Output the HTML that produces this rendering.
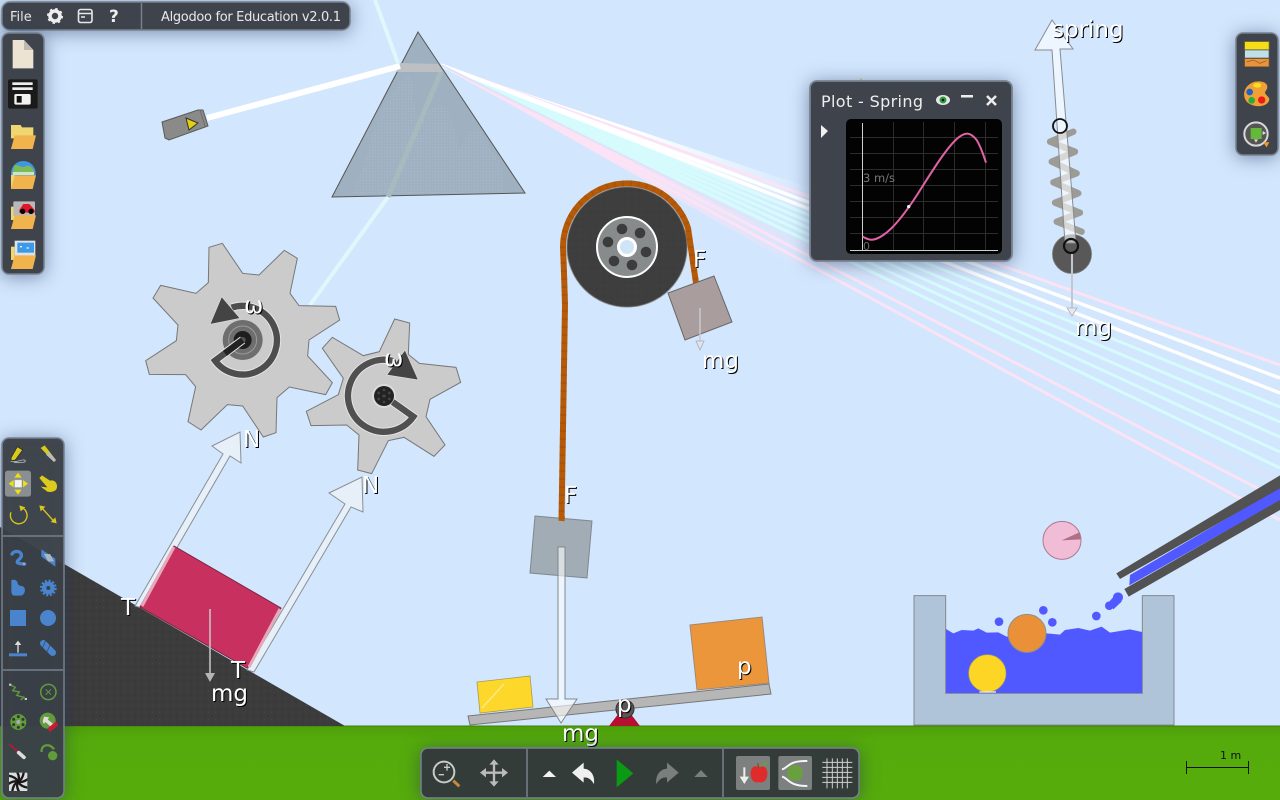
<!DOCTYPE html>
<html><head><meta charset="utf-8"><title>Algodoo</title>
<style>
html,body{margin:0;padding:0;width:1280px;height:800px;overflow:hidden;background:#d2e6fd}
svg{display:block;font-family:"DejaVu Sans",sans-serif}
.l{font-size:23px;fill:#fff;filter:drop-shadow(1px 1px 0 #000)}
.p{filter:drop-shadow(0 2px 9px rgba(30,50,90,.5))}
.u{fill:#e8e8e8;font-size:13px}
</style></head><body>
<svg width="1280" height="800" viewBox="0 0 1280 800" xmlns="http://www.w3.org/2000/svg">
<defs>
<pattern id="dots" width="7" height="7" patternUnits="userSpaceOnUse"><rect width="7" height="7" fill="#3c3c3c"/><circle cx="2" cy="2" r=".8" fill="#333"/><circle cx="5.5" cy="5.5" r=".7" fill="#444"/></pattern>
<pattern id="mot" width="3" height="3" patternUnits="userSpaceOnUse"><rect width="3" height="3" fill="#a0b2c1"/><rect width="1" height="1" fill="#a9bdd4"/></pattern>
<linearGradient id="gr" x1="0" y1="0" x2="0" y2="1"><stop offset="0" stop-color="#4e9f0a"/><stop offset=".2" stop-color="#55ab0b"/><stop offset="1" stop-color="#56ac0b"/></linearGradient>
<linearGradient id="fw" gradientUnits="userSpaceOnUse" x1="441" y1="0" x2="820" y2="0"><stop offset="0" stop-color="#fff"/><stop offset=".5" stop-color="#fff"/><stop offset="1" stop-color="#fff" stop-opacity="0"/></linearGradient>
<linearGradient id="fc" gradientUnits="userSpaceOnUse" x1="441" y1="0" x2="820" y2="0"><stop offset="0" stop-color="#d6fbfd"/><stop offset=".5" stop-color="#d6fbfd"/><stop offset="1" stop-color="#d6fbfd" stop-opacity="0"/></linearGradient>
<linearGradient id="fp" gradientUnits="userSpaceOnUse" x1="441" y1="0" x2="820" y2="0"><stop offset="0" stop-color="#fbe2f6"/><stop offset=".45" stop-color="#fbe2f6"/><stop offset="1" stop-color="#fbe2f6" stop-opacity="0"/></linearGradient>
<clipPath id="sw"><rect x="27" y="1028" width="55" height="55"/></clipPath>
</defs>
<rect width="1280" height="800" fill="#d2e6fd"/>

<!-- rays -->
<polygon points="441,65 820,191 820,222" fill="url(#fw)"/>
<polygon points="441,65 820,222 820,251" fill="url(#fc)"/>
<polygon points="441,65 820,251 820,280" fill="url(#fp)"/>
<g fill="none" stroke-linecap="butt">
<g stroke="#fbe3f5" stroke-width="3">
<path d="M441 65L1280 500"/><path d="M441 65L1280 520"/><path d="M441 65L1280 365"/>
</g>
<g stroke="#d6fbfd" stroke-width="3">
<path d="M441 65L1280 468"/><path d="M441 65L1280 452"/><path d="M441 65L1280 437"/><path d="M441 65L1280 422"/><path d="M441 65L1280 407"/>
</g>
<g stroke="#fff" stroke-width="3.4">
<path d="M441 65L1280 378"/><path d="M441 65L1280 393"/>
</g>
<path d="M441 65L1280 482" stroke="#e0e2f8" stroke-width="2"/>
<path d="M375 0L398 63" stroke="#e2f7fb" stroke-width="4"/>
<path d="M388 197L310 305" stroke="#e2f7fb" stroke-width="4"/>
</g>

<!-- prism -->
<polygon points="418,32 525,193 332,197" fill="#9fb1c0" stroke="#555" stroke-width="1"/>
<path d="M352 195C372 150 372 110 405 78C420 70 408 130 425 115C450 85 452 130 460 150C470 125 480 120 490 150C505 160 502 185 503 192Z" fill="url(#mot)" opacity=".8"/>
<path d="M441 72L388 197" stroke="#a7bbbf" stroke-width="5" fill="none"/>
<polygon points="400,63 438,64 443,72 397,72" fill="#bcc0c2"/>
<path d="M207 118L400 66" stroke="#fff" stroke-width="6"/>

<!-- laser -->
<polygon points="162,122 198,110 203,110 208,126 169,140 165,138" fill="#8a8a88" stroke="#5a5a5a" stroke-width="1"/>
<path d="M200 110L205 126" stroke="#666" stroke-width=".8"/>
<polygon points="186,118 198,123 189,130" fill="#e0d010" stroke="#333" stroke-width="1"/>

<!-- ground & slope -->
<rect y="726" width="1280" height="74" fill="url(#gr)"/>
<rect y="725.5" width="1280" height="1" fill="#3f7f10"/>
<polygon points="0,527 345,726 0,726" fill="url(#dots)"/>

<!-- N arrows -->
<g fill="#e7f0f9" stroke="#8a8f95" stroke-width="1">
<polygon points="135,606 223,454 212,446 240,432 241,463 230,456 142,608"/>
<polygon points="247,670 345,504 329,493 362,477 363,512 351,507 254,672"/>
</g>
<!-- block -->
<polygon points="174,546 281,608 247,668 140,607" fill="#c7305f" stroke="#7c2342" stroke-width="1"/>
<path d="M174 547L142 606" stroke="#e6a9ba" stroke-width="3"/>
<path d="M280 609L249 667" stroke="#e6a9ba" stroke-width="3"/>
<path d="M210 609V675" stroke="#c9c9c9" stroke-opacity=".75" stroke-width="2"/>
<polygon points="205,673 215,673 210,682" fill="#b5b5b5"/>

<!-- gears -->
<g transform="translate(130 230) scale(.33333)">
<polygon points="237,52 277,40 338,130 387,135 463,61 502,85 480,190 507,227 617,229 629,270 537,330 533,378 607,458 587,494 478,471 441,503 438,608 400,621 338,528 292,524 213,600 174,575 197,470 167,434 58,433 47,392 139,332 144,285 69,204 92,166 198,190 235,158" fill="#cbcbcb" stroke="#777" stroke-width="3"/>
<circle cx="338" cy="330" r="60" fill="#6e6e6e"/>
<circle cx="338" cy="330" r="42" fill="none" stroke="#9a9a9a" stroke-width="3"/>
<circle cx="338" cy="330" r="27" fill="#1e1e1e"/>
<circle cx="338" cy="330" r="9" fill="#555"/>
<path d="M338 330L255 392A103 103 0 1 0 305 233" fill="none" stroke="#e4e4e4" stroke-width="25"/>
<path d="M338 330L255 392A103 103 0 1 0 305 233" fill="none" stroke="#4d4d4d" stroke-width="19"/>
<path d="M338 330L285 370" stroke="#222" stroke-width="19" fill="none"/>
<polygon points="240,283 275,200 330,265" fill="#444" stroke="#ddd" stroke-width="2"/>

<polygon points="794,267 839,279 835,373 868,400 978,412 992,457 900,508 888,560 945,645 912,679 822,622 775,632 725,731 683,720 687,615 650,585 543,587 529,544 625,494 640,445 577,355 607,322 700,377 748,365" fill="#cbcbcb" stroke="#777" stroke-width="3"/>
<circle cx="762" cy="498" r="36" fill="#dcdcdc"/>
<circle cx="762" cy="498" r="30" fill="#232323"/>
<g fill="#444"><circle cx="762" cy="498" r="5"/><circle cx="762" cy="480" r="4"/><circle cx="762" cy="516" r="4"/><circle cx="746" cy="489" r="4"/><circle cx="778" cy="489" r="4"/><circle cx="746" cy="507" r="4"/><circle cx="778" cy="507" r="4"/></g>
<path d="M788 516L850 560A108 108 0 1 1 790 393" fill="none" stroke="#e4e4e4" stroke-width="25"/>
<path d="M788 516L850 560A108 108 0 1 1 790 393" fill="none" stroke="#505050" stroke-width="19"/>
<polygon points="865,450 825,360 770,435" fill="#444" stroke="#ddd" stroke-width="2"/>
</g>

<!-- rope pulley -->
<circle cx="627" cy="247" r="60" fill="#404040" stroke="#9a9a9a" stroke-width="1.2"/>
<circle cx="627" cy="247" r="60" fill="url(#dots)" opacity=".6"/>
<circle cx="627" cy="247" r="30" fill="#878b8b" stroke="#fff" stroke-width="2"/>
<g fill="#3c3c3c"><circle cx="622" cy="229" r="5.3"/><circle cx="640" cy="233" r="5.3"/><circle cx="646" cy="252" r="5.3"/><circle cx="632" cy="265" r="5.3"/><circle cx="614" cy="261" r="5.3"/><circle cx="608" cy="242" r="5.3"/></g>
<circle cx="627" cy="247" r="8.5" fill="#cfe5f5" stroke="#fff" stroke-width="3"/>
<path d="M561.5 520L565 305Q564 270 563 247A64 64 0 0 1 688 228L696 283" fill="none" stroke="#b65a08" stroke-width="6"/>
<path d="M561.5 520L565 305Q564 270 563 247A64 64 0 0 1 688 228L696 283" fill="none" stroke="#8f4a10" stroke-width="6" stroke-dasharray="2 6" opacity=".35"/>
<polygon points="714,276 732,322 685,340 668,293" fill="#a99d9e" stroke="#666" stroke-width="1"/>
<path d="M700 308V342" stroke="#c6c8cc" stroke-width="1.5"/>
<polygon points="696,341 704,341 700,350" fill="#dfe5ec" stroke="#a9aeb5" stroke-width=".8"/>

<!-- gray box -->
<polygon points="535,516 592,521 587,578 530,573" fill="#a1acb5" stroke="#7f8890" stroke-width="1"/>
<path d="M561.5 521L562 516" stroke="#b65a08" stroke-width="6"/>

<!-- seesaw -->
<polygon points="477,682 530,676 533,707 480,713" fill="#fdd72a" stroke="#a89a55" stroke-width=".8"/>
<path d="M482 708L504 684" stroke="#fde98a" stroke-width="1.5"/>
<polygon points="690,625 762,617 769,683 697,690" fill="#ec963b" stroke="#9a8a78" stroke-width="1"/>
<polygon points="609,726 640,726 630,713 619,713" fill="#b60f30"/>
<polygon points="468,716 769,684 771,694 470,725" fill="#b6b6b6" stroke="#777" stroke-width="1"/>
<circle cx="625" cy="709" r="9" fill="#585858" stroke="#333" stroke-width="1"/>
<circle cx="622" cy="713" r="1.5" fill="#b60f30"/><circle cx="628" cy="712" r="1.5" fill="#b60f30"/>
<path d="M558 547h7V699h12L561 723L546 699h12Z" fill="#fff" fill-opacity=".6" stroke="#81878d" stroke-width="1"/>

<!-- spring -->
<circle cx="1072" cy="254" r="19.5" fill="#585858" stroke="#777" stroke-width=".8"/>
<g transform="translate(1020 10) scale(.33333)">
<path d="M160 365L90 395L165 425L95 455L170 490L100 517L175 550L105 578L180 608L110 635L185 665" fill="none" stroke="#9c9b96" stroke-width="19" stroke-linejoin="round" stroke-linecap="round"/>
</g>
<path d="M1065 243L1052 50H1035L1052 20L1073 49H1060L1076 243Z" fill="#fff" fill-opacity=".6" stroke="#868b92" stroke-width="1"/>
<circle cx="1060" cy="126" r="7" fill="none" stroke="#111" stroke-width="1.8"/>
<circle cx="1071" cy="246" r="7" fill="none" stroke="#111" stroke-width="2.2"/>
<path d="M1072 254V310" stroke="#c4c8ce" stroke-width="2"/>
<polygon points="1067,308 1077,308 1072,316" fill="#e4e9ef" stroke="#aab0b6" stroke-width=".8"/>

<!-- water scene -->
<g transform="translate(900 480) scale(.33333)">
<polygon points="42,347 137,347 137,640 727,640 727,347 822,347 822,735 42,735" fill="#afc4d8" stroke="#85898e" stroke-width="3"/>
<path d="M138 447L160 460L185 450L220 452L235 445L260 458L295 457L320 470L440 460L480 464L495 450L535 444L570 452L605 440L630 458L690 448L726 456V639H138Z" fill="#5059ff"/>
<circle cx="262" cy="580" r="56" fill="#fdd524" stroke="#a9a35c" stroke-width="2"/>
<rect x="238" y="634" width="50" height="4" fill="#e6edf5"/>
<circle cx="381" cy="460" r="57" fill="#ea9038" stroke="#8f8f85" stroke-width="3"/>
<circle cx="486" cy="181" r="57" fill="#f0bcd6" stroke="#b07a90" stroke-width="3"/>
<polygon points="485,181 538,157 543,178" fill="#b26f83"/>
<g fill="#5059ff"><circle cx="297" cy="425" r="13"/><circle cx="430" cy="391" r="13"/><circle cx="457" cy="427" r="13"/><circle cx="589" cy="408" r="13"/><circle cx="628" cy="377" r="13"/><circle cx="654" cy="352" r="15"/><path d="M628 365L645 345L665 365L640 388Z"/></g>
<polygon points="690,285 1140,22 1140,62 688,316" fill="#5059ff"/>
<polygon points="649,280 1140,-14 1140,25 660,297" fill="#525252"/>
<polygon points="673,327 1140,60 1140,90 686,350" fill="#525252"/>
</g>

<!-- labels -->
<g class="l">
<text x="243" y="447">N</text><text x="362" y="493">N</text>
<text x="121" y="615">T</text><text x="231" y="678">T</text>
<text x="211" y="701">mg</text>
<text x="244" y="313">ω</text><text x="384" y="366">ω</text>
<text x="693" y="267">F</text><text x="702" y="368">mg</text>
<text x="564" y="503">F</text>
<text x="737" y="674">p</text><text x="617" y="712">p</text><text x="562" y="741">mg</text>
<text x="1052" y="37">spring</text><text x="1075" y="335">mg</text>
</g>

<!-- scale -->
<g stroke="#111" stroke-width="1" fill="none"><path d="M1186 767.5H1249M1186.5 761V774M1248.5 761V774"/></g>
<text x="1220" y="759" font-size="11" fill="#111">1 m</text>

<!-- top bar -->
<rect class="p" x="2" y="2" width="348" height="28" rx="8" fill="#3f444c" stroke="#77818f" stroke-width="1.5"/>
<path d="M141.500 3V29" stroke="#777f89" stroke-width="1.500"/>
<text x="10" y="21" class="u">File</text>
<text x="161" y="21" class="u" textLength="180" lengthAdjust="spacing">Algodoo for Education v2.0.1</text>
<circle cx="55" cy="16" r="5" fill="none" stroke="#eee" stroke-width="3.600"/><circle cx="55" cy="16" r="7" fill="none" stroke="#eee" stroke-width="2" stroke-dasharray="2.400 3.100"/>
<rect x="78.500" y="9.500" width="13.500" height="13" rx="2" fill="none" stroke="#e8e8e8" stroke-width="1.600"/><path d="M79 13.500H92M81 17H85" stroke="#e8e8e8" stroke-width="1.500"/>
<text x="109" y="22" font-size="17" font-weight="bold" fill="#eee">?</text>

<!-- left top toolbar -->
<rect class="p" x="2" y="33" width="42" height="241" rx="7" fill="#3f444c" stroke="#77818f" stroke-width="1.500"/>
<g transform="scale(.33333)">
<path d="M38 120H72L100 150V205H38Z" fill="#ece3d3"/><path d="M72 120L100 150H72Z" fill="#bdbab3"/>
<rect x="24" y="238" width="89" height="88" rx="6" fill="#1a1a1a"/>
<rect x="37" y="247" width="61" height="8" fill="#eee"/><rect x="37" y="262" width="61" height="8" fill="#eee"/>
<rect x="43" y="282" width="49" height="32" rx="5" fill="#f2f2f2"/><rect x="50" y="288" width="15" height="20" fill="#111"/>
<path d="M33 375H62L66 382H100V415H33Z" fill="#efd670"/>
<path d="M44 406H108L98 447H33Z" fill="#f1b44c"/>
<path d="M33 520A37 37 0 0 1 107 520V530H33Z" fill="#3f97e0"/><path d="M42 498C55 490 62 505 75 500C85 492 98 502 104 515C90 522 60 525 38 518Z" fill="#7dbb56"/><rect x="38" y="516" width="64" height="9" fill="#cfe5c8"/>
<path d="M33 525H44V566H33Z" fill="#efd670"/><path d="M44 526H108L98 567H33Z" fill="#f1b44c"/>
<path d="M33 620H44V660H33Z" fill="#efd670"/><rect x="40" y="604" width="65" height="45" rx="3" fill="#b8b8b8"/><path d="M58 630L70 612H88L104 630V638H58Z" fill="#e0162b"/><circle cx="68" cy="634" r="8" fill="#000"/><circle cx="93" cy="634" r="8" fill="#000"/>
<path d="M44 646H108L98 687H33Z" fill="#f1b44c"/>
<path d="M33 740H44V780H33Z" fill="#efd670"/><rect x="44" y="722" width="62" height="45" fill="#dfe3e6"/><rect x="52" y="728" width="50" height="30" fill="#3d9ae8"/><rect x="60" y="738" width="6" height="4" fill="#fff"/><rect x="80" y="742" width="6" height="4" fill="#fff"/>
<path d="M44 766H108L98 807H33Z" fill="#f1b44c"/>
</g>

<!-- right toolbar -->
<rect class="p" x="1236" y="33" width="42" height="122" rx="7" fill="#3f444c" stroke="#77818f" stroke-width="1.500"/>
<g transform="translate(1020 10) scale(.33333)">
<rect x="674" y="95" width="73" height="24" fill="#f5de18" stroke="#8a7b22" stroke-width="2"/>
<rect x="674" y="120" width="73" height="24" fill="#bfe0e6" stroke="#556" stroke-width="2"/>
<rect x="674" y="146" width="73" height="24" fill="#e8943c" stroke="#8a5a22" stroke-width="2"/>
<path d="M680 156L700 150L720 160L740 152" fill="none" stroke="#9a5a20" stroke-width="2"/>
<path d="M705 215C735 210 750 225 738 242C728 252 748 258 748 268C745 292 700 296 680 275C665 255 672 225 705 215Z" fill="#f0a037"/>
<ellipse cx="712" cy="226" rx="12" ry="7" fill="#f5e21a"/><circle cx="689" cy="246" r="10" fill="#1c62c4"/><circle cx="695" cy="271" r="10" fill="#27ad3c"/><circle cx="725" cy="270" r="11" fill="#ee1a1a"/>
<circle cx="708" cy="372" r="35" fill="#555" stroke="#d7d7d7" stroke-width="6"/><rect x="692" y="354" width="33" height="33" fill="#66b83a"/><polygon points="728,363 738,369 728,375" fill="#ddd"/><polygon points="702,388 714,388 708,398" fill="#ddd"/><polygon points="730,398 748,396 740,412" fill="#f0982c"/>
</g>

<!-- lower-left toolbar -->
<rect class="p" x="2" y="438" width="62" height="360" rx="7" fill="#3b4047" fill-opacity=".95" stroke="#77818f" stroke-width="1.500"/>
<path d="M3 536H63M3 670H63" stroke="#77818f" stroke-width="1.500"/>
<g transform="translate(0 430) scale(.33333)">
<!-- pencil -->
<path d="M33 84L52 50L68 60L46 90L34 92Z" fill="#d9c81e" stroke="#222" stroke-width="2"/><path d="M32 94C50 100 72 84 76 92C78 100 50 98 42 97" fill="none" stroke="#b7b7b7" stroke-width="2.500"/>
<!-- knife -->
<path d="M122 54L134 46L168 90L162 96Z" fill="#d9c81e"/><path d="M146 66L168 90L162 96L138 74Z" fill="#bbb"/>
<!-- select -->
<rect x="15" y="122" width="78" height="78" rx="8" fill="#8c8f91"/>
<rect x="44" y="150" width="21" height="22" fill="#f3f3f3" stroke="#ccc"/>
<g fill="#eee00f"><polygon points="54,128 65,143 43,143"/><polygon points="54,194 65,179 43,179"/><polygon points="26,161 41,150 41,172"/><polygon points="84,161 69,150 69,172"/></g>
<!-- hand -->
<path d="M118 144L126 136L150 152C160 148 172 156 171 171C170 184 155 188 142 185L122 170L142 172Z" fill="#dccb1c"/>
<!-- rotate -->
<path d="M62 232A25 25 0 1 1 33 247" fill="none" stroke="#d8c81c" stroke-width="4"/><polygon points="58,226 76,232 62,244" fill="#d8c81c"/>
<!-- scale -->
<path d="M126 234L160 272" stroke="#d8c81c" stroke-width="4"/><polygon points="118,226 136,230 122,244" fill="#d8c81c"/><polygon points="170,280 152,276 166,262" fill="#d8c81c"/>
<!-- blue -->
<path d="M36 372C42 360 66 362 64 378C62 390 50 388 52 398C58 402 66 402 74 402" fill="none" stroke="#4a84cc" stroke-width="10" stroke-linecap="round"/><circle cx="72" cy="402" r="4" fill="#9ab"/>
<polygon points="124,358 166,386 166,410 124,380" fill="#4a84cc"/><polygon points="132,372 150,372 162,394 144,394" fill="#aab6c2"/>
<path d="M34 452C34 448 50 448 52 456C53 464 58 468 66 468C80 472 76 496 62 497H44C36 497 34 490 34 480Z" fill="#4a84cc"/>
<circle cx="145" cy="474" r="19" fill="#4a84cc"/><circle cx="145" cy="474" r="21" fill="none" stroke="#4a84cc" stroke-width="8" stroke-dasharray="6 5"/><circle cx="145" cy="474" r="6" fill="#3b4047"/>
<rect x="30" y="540" width="48" height="48" fill="#4a84cc"/>
<circle cx="144" cy="564" r="24" fill="#4a84cc"/>
<rect x="27" y="670" width="54" height="9" fill="#4a84cc"/><path d="M54 668V640" stroke="#ddd" stroke-width="4"/><polygon points="44,645 64,645 54,632" fill="#ddd"/>
<path d="M130 640L158 668" stroke="#4a84cc" stroke-width="20" stroke-linecap="round"/>
<path d="M137 632L128 652M150 645L141 665" stroke="#3b4047" stroke-width="2"/>
<!-- green -->
<path d="M30 764L46 772L38 782L58 786L50 796L72 802L62 810" fill="none" stroke="#629b3b" stroke-width="4"/><rect x="27" y="761" width="7" height="6" fill="#ccc"/><rect x="74" y="804" width="7" height="6" fill="#ccc"/>
<circle cx="145" cy="786" r="23" fill="none" stroke="#629b3b" stroke-width="4.500"/><path d="M137 778L153 794M153 778L137 794" stroke="#629b3b" stroke-width="3"/>
<circle cx="55" cy="876" r="24" fill="#629b3b"/><circle cx="55" cy="876" r="6" fill="#aab"/><g fill="#2e3a30"><circle cx="55" cy="860" r="4.500"/><circle cx="55" cy="892" r="4.500"/><circle cx="41" cy="868" r="4.500"/><circle cx="69" cy="868" r="4.500"/><circle cx="41" cy="884" r="4.500"/><circle cx="69" cy="884" r="4.500"/></g>
<circle cx="143" cy="872" r="24" fill="#629b3b"/><polygon points="128,875 132,860 148,862 143,868 160,882 152,890 136,876 132,882" fill="#ddd"/><polygon points="142,896 168,874 175,886 150,906" fill="#c71a36"/>
<path d="M28 942L56 968" stroke="#c8152f" stroke-width="4.500"/><path d="M56 968L72 982" stroke="#ddd" stroke-width="11" stroke-linecap="round"/>
<path d="M125 966C122 944 150 938 162 958" fill="none" stroke="#629b3b" stroke-width="7"/><circle cx="158" cy="977" r="14" fill="#629b3b"/>
<rect x="27" y="1028" width="55" height="55" fill="#ddd"/>
<g clip-path="url(#sw)" fill="none" stroke="#1a1a1a" stroke-width="7">
<path d="M54 1055Q70 1048 72 1020"/><path d="M54 1055Q72 1060 92 1040"/><path d="M54 1055Q62 1072 92 1074"/><path d="M54 1055Q46 1072 62 1092"/><path d="M54 1055Q38 1062 36 1092"/><path d="M54 1055Q36 1050 16 1070"/><path d="M54 1055Q46 1038 16 1036"/><path d="M54 1055Q62 1038 46 1018"/>
</g>
<circle cx="54" cy="1055" r="4" fill="#111"/>
</g>

<!-- bottom toolbar -->
<rect class="p" x="421" y="748" width="438" height="50" rx="7" fill="#343c3a" stroke="#77818f" stroke-width="1.500"/>
<path d="M527 749V797M723 749V797" stroke="#77818f" stroke-width="1.500"/>
<g transform="translate(420 680) scale(.33333)">
<circle cx="72" cy="276" r="31" fill="none" stroke="#c9c9c9" stroke-width="6"/>
<path d="M56 284H72M72 262H90M81 252V272" stroke="#c9c9c9" stroke-width="4"/>
<path d="M100 302L118 319" stroke="#c58a3a" stroke-width="9"/>
<path d="M222 250V306M194 278H250" stroke="#bbb" stroke-width="7"/>
<g fill="#bbb"><polygon points="222,238 236,254 208,254"/><polygon points="222,320 236,304 208,304"/><polygon points="180,278 198,264 198,292"/><polygon points="264,278 246,264 246,292"/></g>
<polygon points="388,272 408,291 368,291" fill="#f3f3f3"/>
<path d="M456 278L491 248V266C515 268 525 290 522 312C512 296 505 292 491 292V308Z" fill="#f0f0f0"/>
<polygon points="590,238 640,280 590,322" fill="#0a9a14"/>
<path d="M776 278L741 248V266C717 268 706 290 709 312C719 296 727 292 741 292V308Z" fill="#7a7e7d"/>
<polygon points="843,270 863,291 823,291" fill="#7a7e7d"/>
<rect x="948" y="228" width="102" height="102" rx="6" fill="#7c8180"/>
<rect x="1075" y="228" width="101" height="102" rx="6" fill="#7c8180"/>
<path d="M973 262V298" stroke="#eee" stroke-width="6"/><polygon points="959,290 987,290 973,312" fill="#eee"/>
<path d="M1017 262C1000 252 990 268 992 285C994 305 1008 310 1017 306C1026 310 1040 305 1042 285C1044 268 1034 252 1017 262Z" fill="#df2b2b"/>
<path d="M1018 262L1040 242L1040 254Z" fill="#6aa038"/><path d="M1016 262L1013 250" stroke="#6a4a20" stroke-width="3"/>
<circle cx="1125" cy="279" r="24" fill="#6a9f40"/>
<path d="M1086 268C1104 265 1104 241 1162 243M1086 290C1104 293 1104 318 1162 318" fill="none" stroke="#f4f4f4" stroke-width="6"/>
<g stroke="#cfcfcf" stroke-width="3"><path d="M1207 247H1297M1207 262H1297M1207 277H1297M1207 292H1297M1207 307H1297M1221 235V325M1237 235V325M1252 235V325M1267 235V325M1282 235V325"/></g>
</g>

<!-- plot -->
<polygon points="857,85 861,78 865,85" fill="#e5c43a"/>
<rect class="p" x="810" y="81" width="202" height="180" rx="7" fill="#3f444c" stroke="#79838f" stroke-width="1.800"/>
<text x="821" y="107" font-size="16" fill="#eee" textLength="102" lengthAdjust="spacing">Plot - Spring</text>
<ellipse cx="943" cy="100" rx="7" ry="5" fill="#e8e8e8"/><circle cx="943" cy="100" r="3.500" fill="#2aa040"/><circle cx="943" cy="100" r="1.300" fill="#111"/>
<rect x="961" y="95" width="12" height="2.500" fill="#eee"/>
<path d="M987 96L996 105M996 96L987 105" stroke="#eee" stroke-width="2.500"/>
<polygon points="821,125 828,131 821,138" fill="#f0f0f0"/>
<rect x="846" y="119" width="156" height="135" rx="5" fill="#030303"/>
<g stroke="#2c2c2c" stroke-width="1"><path d="M893.500 122V250M923.500 122V250M954.500 122V250M985.500 122V250M850 137.500H998M850 153.500H998M850 169.500H998M850 185.500H998M850 201.500H998M850 217.500H998M850 233.500H998"/></g>
<path d="M862.500 123V250M850 250.500H998" stroke="#cfcfcf" stroke-width="1"/>
<text x="863" y="182" font-size="11.500" fill="#777">3 m/s</text>
<text x="863" y="250" font-size="11" fill="#666">0</text>
<g transform="translate(800 70) scale(.33333)">
<path d="M188 500C205 510 220 516 250 495C285 472 330 410 370 345C405 290 440 235 470 207C495 185 510 185 530 210C545 235 550 255 558 278" fill="none" stroke="#e262a6" stroke-width="6"/>
<circle cx="326" cy="410" r="5" fill="#eee"/>
</g>
</svg>
</body></html>
